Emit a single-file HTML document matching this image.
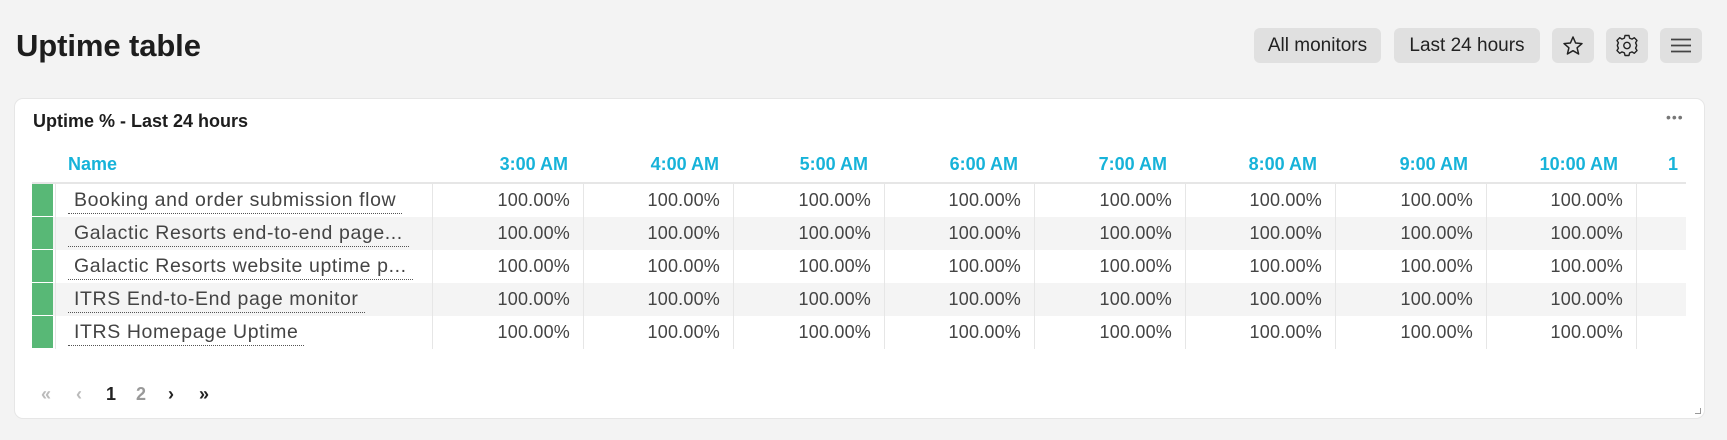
<!DOCTYPE html>
<html><head><meta charset="utf-8"><style>
*{box-sizing:border-box;margin:0;padding:0}
body{width:1727px;height:440px;background:#f3f3f3;font-family:"Liberation Sans",sans-serif;position:relative;overflow:hidden;color:#222}
.abs{position:absolute}
h1{position:absolute;left:16px;top:28px;font-size:31px;font-weight:bold;color:#1d1d1d;letter-spacing:-0.1px}
.btn{position:absolute;top:28px;height:35px;background:#e0e0e0;border-radius:6px;font-size:19px;color:#222;line-height:35px;text-align:center}
.card{position:absolute;left:14px;top:98px;width:1691px;height:321px;background:#fff;border:1px solid #e6e6e6;border-radius:9px;overflow:hidden}
.ct{position:absolute;left:18px;top:12px;font-size:18px;font-weight:bold;color:#1d1d1d}
.hd{position:absolute;top:55px;font-size:18px;font-weight:bold;color:#17b3d9;text-align:right;width:140px}
.row{position:absolute;left:17px;width:1654px;height:33px;overflow:hidden}
.g{position:absolute;left:0;top:0;width:21px;height:33px;background:#58b876;border-bottom:1px solid #fff}
.nm{position:absolute;left:36px;top:5px;font-size:19.5px;letter-spacing:0.6px;color:#444;padding:0 6px 1px 6px;border-bottom:1px dotted #555;white-space:nowrap}
.v{position:absolute;top:6px;font-size:18px;letter-spacing:0.2px;color:#444;width:130px;text-align:right}
.vl{position:absolute;top:0;width:1px;height:33px;background:#e6e6e6}
.pg{position:absolute;top:285px;font-size:18px;font-weight:bold}
</style></head><body>
<h1>Uptime table</h1>
<div class="btn" style="left:1254px;width:127px">All monitors</div>
<div class="btn" style="left:1394px;width:146px">Last 24 hours</div>
<div class="btn" style="left:1552px;width:42px"><svg width="42" height="35" viewBox="0 0 42 35"><path d="M21 9 L23.6 15 L30 15.6 L25.1 19.8 L26.6 26 L21 22.7 L15.4 26 L16.9 19.8 L12 15.6 L18.4 15 Z" fill="none" stroke="#222" stroke-width="1.5" stroke-linejoin="round"/></svg></div>
<div class="btn" style="left:1606px;width:42px"><svg width="42" height="35" viewBox="0 0 42 35"><g transform="translate(21 17.5)" fill="none" stroke="#222" stroke-width="1.4"><path d="M-2 -10 L2 -10 L2.6 -7.4 L5 -6.4 L7.3 -7.8 L10 -5 L8.6 -2.7 L9.6 -0.3 L9.6 0.3 L8.6 2.7 L10 5 L7.3 7.8 L5 6.4 L2.6 7.4 L2 10 L-2 10 L-2.6 7.4 L-5 6.4 L-7.3 7.8 L-10 5 L-8.6 2.7 L-9.6 0.3 L-9.6 -0.3 L-8.6 -2.7 L-10 -5 L-7.3 -7.8 L-5 -6.4 L-2.6 -7.4 Z" stroke-linejoin="round"/><circle r="3.2"/></g></svg></div>
<div class="btn" style="left:1660px;width:42px"><svg width="42" height="35" viewBox="0 0 42 35"><path d="M11 11.5H31M11 17.5H31M11 23.5H31" stroke="#444" stroke-width="1.8"/></svg></div>
<div class="card">
<div class="ct">Uptime % - Last 24 hours</div>
<div class="abs" style="left:1651px;top:10px;font-size:14px;color:#777;letter-spacing:1px">•••</div>
<div class="hd" style="left:53px;text-align:left">Name</div>
<div class="hd" style="left:413px">3:00 AM</div>
<div class="hd" style="left:564px">4:00 AM</div>
<div class="hd" style="left:713px">5:00 AM</div>
<div class="hd" style="left:863px">6:00 AM</div>
<div class="hd" style="left:1012px">7:00 AM</div>
<div class="hd" style="left:1162px">8:00 AM</div>
<div class="hd" style="left:1313px">9:00 AM</div>
<div class="hd" style="left:1463px">10:00 AM</div>
<div class="hd" style="left:1523px">1</div>
<div class="abs" style="left:17px;top:83px;width:1654px;height:2px;background:#e6e6e6"></div>
<div id="rows"></div>
<div class="pg" style="left:26px;color:#bbb">«</div>
<div class="pg" style="left:61px;color:#bbb">‹</div>
<div class="pg" style="left:91px;color:#222">1</div>
<div class="pg" style="left:121px;color:#999">2</div>
<div class="pg" style="left:153px;color:#222">›</div>
<div class="pg" style="left:184px;color:#222">»</div>
<div class="abs" style="left:1680px;top:309px;width:6px;height:6px;border-right:1px solid #999;border-bottom:1px solid #999"></div>
</div>
<script>
var names=["Booking and order submission flow","Galactic Resorts end-to-end page...","Galactic Resorts website uptime p...","ITRS End-to-End page monitor","ITRS Homepage Uptime"];
var h="";
for(var i=0;i<5;i++){
 h+='<div class="row" style="top:'+(85+i*33)+'px;background:'+(i%2?'#f4f4f4':'#fff')+'">';
 h+='<div class="g"></div><div class="vl" style="left:23px"></div><div class="nm">'+names[i]+'</div>';
 for(var c=0;c<9;c++){var b=400+c*150.5;h+='<div class="vl" style="left:'+Math.round(b)+'px"></div>';
  h+='<div class="v" style="left:'+Math.round(b+150.5-143)+'px">100.00%</div>';}
 h+='</div>';
}
document.getElementById('rows').innerHTML=h;
</script>
</body></html>
